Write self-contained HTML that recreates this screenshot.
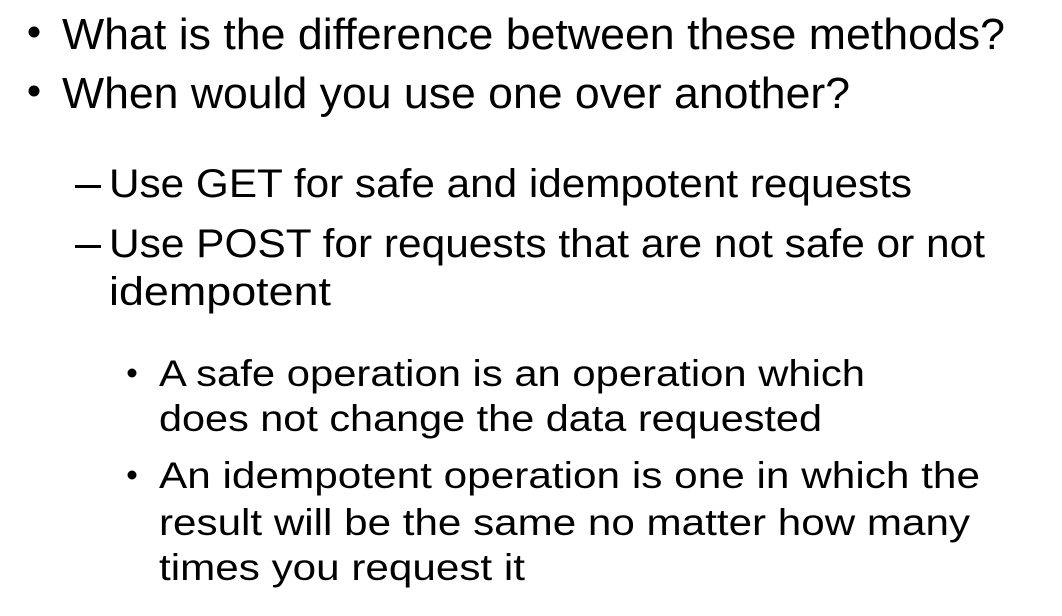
<!DOCTYPE html>
<html><head><meta charset="utf-8"><style>
html,body{margin:0;padding:0;background:#fff;width:1062px;height:616px;overflow:hidden}
svg text{font-family:"Liberation Sans",sans-serif;fill:#000}
</style></head><body>
<svg width="1062" height="616" xmlns="http://www.w3.org/2000/svg">
<circle cx="34" cy="32" r="5.5"/>
<text x="62" y="49" font-size="44" textLength="943" lengthAdjust="spacingAndGlyphs">What is the difference between these methods?</text>
<circle cx="34" cy="91" r="5.5"/>
<text x="62" y="108" font-size="44" textLength="788" lengthAdjust="spacingAndGlyphs">When would you use one over another?</text>
<rect x="75" y="185" width="26" height="3"/>
<text x="109" y="197" font-size="40" textLength="803" lengthAdjust="spacingAndGlyphs">Use GET for safe and idempotent requests</text>
<rect x="75" y="245" width="26" height="3"/>
<text x="109" y="257" font-size="40" textLength="876" lengthAdjust="spacingAndGlyphs">Use POST for requests that are not safe or not</text>
<text x="109" y="305" font-size="40" textLength="222" lengthAdjust="spacingAndGlyphs">idempotent</text>
<circle cx="132" cy="373" r="4.5"/>
<text x="159" y="386" font-size="37" textLength="706" lengthAdjust="spacingAndGlyphs">A safe operation is an operation which</text>
<text x="159" y="431" font-size="37" textLength="663" lengthAdjust="spacingAndGlyphs">does not change the data requested</text>
<circle cx="132" cy="475" r="4.5"/>
<text x="159" y="488" font-size="37" textLength="821" lengthAdjust="spacingAndGlyphs">An idempotent operation is one in which the</text>
<text x="159" y="535" font-size="37" textLength="811" lengthAdjust="spacingAndGlyphs">result will be the same no matter how many</text>
<text x="159" y="580" font-size="37" textLength="366" lengthAdjust="spacingAndGlyphs">times you request it</text>
</svg>
</body></html>
